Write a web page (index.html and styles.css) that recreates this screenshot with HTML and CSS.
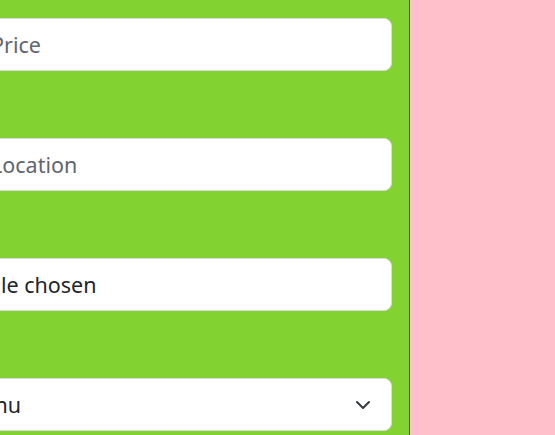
FILE: index.html
```html
<!DOCTYPE html>
<html lang="en">
<head>
<meta charset="utf-8">
<title>Form</title>
<link rel="stylesheet" href="styles.css">
</head>
<body>
  <main class="form-panel">
    <form class="form">
      <div class="field"><span class="placeholder">Price</span></div>
      <div class="field"><span class="placeholder">Location</span></div>
      <div class="field"><span class="value shift-file">No file chosen</span></div>
      <div class="field field-select">
        <span class="value shift-select">Open this select menu</span>
        <svg class="chevron" width="16" height="16" viewBox="0 0 16 16" aria-hidden="true"><path d="m2 5 6 6 6-6" fill="none" stroke="#343a40" stroke-width="2" stroke-linecap="round" stroke-linejoin="round"/></svg>
      </div>
    </form>
  </main>
  <aside class="side-panel"></aside>
</body>
</html>
```
FILE: styles.css
```css
html, body {
  margin: 0;
  padding: 0;
}
body {
  width: 555px;
  height: 435px;
  display: flex;
  overflow: hidden;
  font-family: "Noto Sans", "Open Sans", sans-serif;
}
.form-panel {
  flex: 0 0 409px;
  background: #82d232;
  border-right: 1px solid #1a5fd6;
  overflow: hidden;
}
.side-panel {
  flex: 1;
  background: #ffc0cb;
}
.form {
  display: flex;
  flex-direction: column;
  gap: 67px;
  padding: 18px 17px 0 0;
  margin-left: -26px;
}
.field {
  height: 53px;
  box-sizing: border-box;
  background: #fff;
  border: 1px solid #d9dcdf;
  border-radius: 8px;
  display: flex;
  align-items: center;
  padding: 0 20px 0 16px;
  font-size: 21.5px;
  white-space: nowrap;
  overflow: hidden;
}
.placeholder {
  color: #5f666d;
}
.value {
  color: #212529;
}
.shift-file {
  margin-left: -38px;
}
.shift-select {
  margin-left: -196px;
}
.chevron {
  margin-left: auto;
  flex: 0 0 16px;
}
```
